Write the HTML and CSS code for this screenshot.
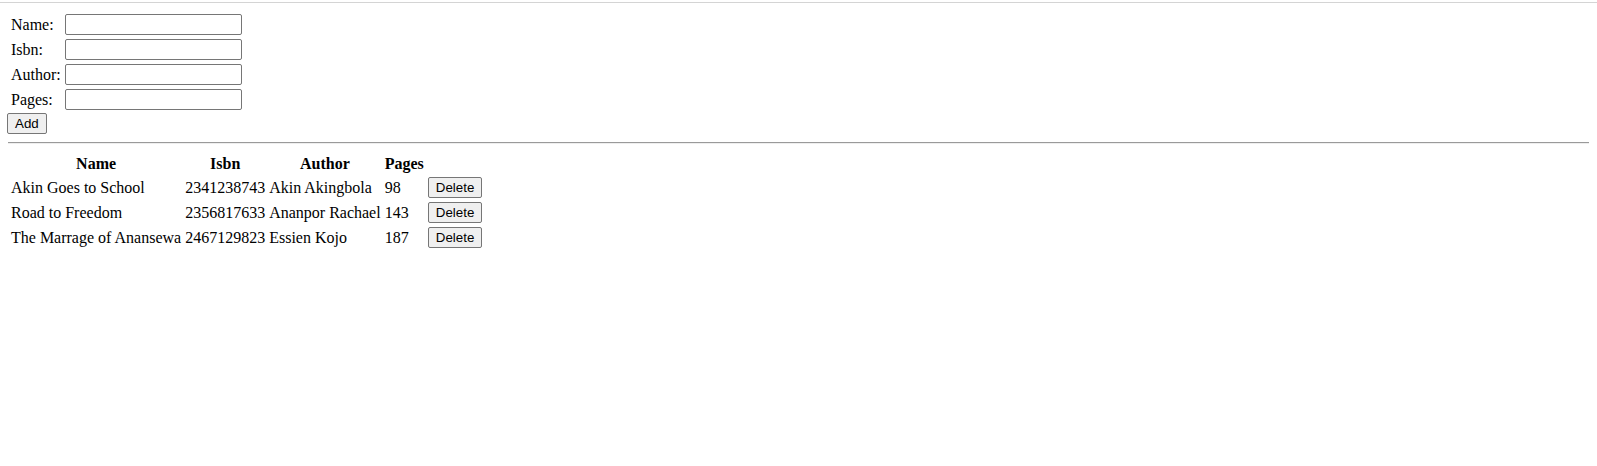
FILE: index.html
```html
<!DOCTYPE html>
<html lang="en">
<head>
<meta charset="utf-8">
<title>Books</title>
<link rel="stylesheet" href="styles.css">
</head>
<body>
<div class="topline"></div>
<div class="page">
  <form class="book-form">
    <table class="form-table">
      <tr><td>Name:</td><td><input type="text" class="field"></td></tr>
      <tr><td>Isbn:</td><td><input type="text" class="field"></td></tr>
      <tr><td>Author:</td><td><input type="text" class="field"></td></tr>
      <tr><td>Pages:</td><td><input type="text" class="field"></td></tr>
    </table>
    <button type="button" class="btn">Add</button>
  </form>
  <hr class="divider">
  <table class="books">
    <thead>
      <tr><th>Name</th><th>Isbn</th><th>Author</th><th>Pages</th><th></th></tr>
    </thead>
    <tbody>
      <tr><td>Akin Goes to School</td><td>2341238743</td><td>Akin Akingbola</td><td>98</td><td><button type="button" class="btn">Delete</button></td></tr>
      <tr><td>Road to Freedom</td><td>2356817633</td><td>Ananpor Rachael</td><td>143</td><td><button type="button" class="btn">Delete</button></td></tr>
      <tr><td>The Marrage of Anansewa</td><td>2467129823</td><td>Essien Kojo</td><td>187</td><td><button type="button" class="btn">Delete</button></td></tr>
    </tbody>
  </table>
</div>
</body>
</html>
```
FILE: styles.css
```css
html, body {
  margin: 0;
  background: #ffffff;
}
body {
  font-family: "Liberation Serif", "Times New Roman", serif;
  font-size: 16px;
  color: #000000;
}
.topline {
  margin-top: 2px;
  height: 1px;
  background: #d4d4d4;
}
.page {
  padding: 8px 8px 8px 8px;
}
.book-form {
  margin: 0;
}
.form-table,
.books {
  border-spacing: 2px;
  border-collapse: separate;
}
.form-table td,
.books td,
.books th {
  padding: 1px;
  vertical-align: middle;
}
.books th {
  font-weight: bold;
  text-align: center;
}
.field {
  box-sizing: border-box;
  width: 177px;
  height: 21px;
  margin: 0;
  padding: 1px 2px;
  border: 1px solid #767676;
  border-radius: 2px;
  background: #ffffff;
  font-family: "Liberation Sans", Arial, sans-serif;
  font-size: 13.33px;
  display: block;
}
.btn {
  box-sizing: border-box;
  height: 21px;
  margin: 0;
  padding: 1px 7px;
  border: 1px solid #767676;
  border-radius: 2px;
  background: #efefef;
  color: #000000;
  font-family: "Liberation Sans", Arial, sans-serif;
  font-size: 13.33px;
  line-height: 16px;
  vertical-align: middle;
}
.book-form .btn {
  margin-left: -1px;
}
.divider {
  margin: 8px 0 8px 0;
  border: 0;
  border-top: 1px solid #9a9a9a;
  border-bottom: 1px solid #eeeeee;
  height: 0;
}
```
